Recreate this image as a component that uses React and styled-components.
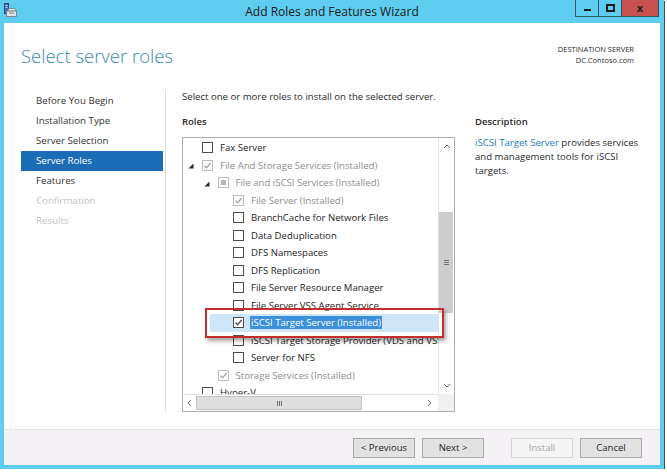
import React from 'react';
import styled, { createGlobalStyle } from 'styled-components';

const GlobalStyle = createGlobalStyle`
  html, body {
    margin: 0;
    padding: 0;
    background: #ffffff;
  }
  body {
    font-family: "Open Sans", "Noto Sans", "Liberation Sans", sans-serif;
    color: #1e1e1e;
  }
`;

const steps = [
  { label: 'Before You Begin' },
  { label: 'Installation Type' },
  { label: 'Server Selection' },
  { label: 'Server Roles', active: true },
  { label: 'Features' },
  { label: 'Confirmation', disabled: true },
  { label: 'Results', disabled: true },
];

const roles = [
  { label: 'Fax Server', level: 0 },
  { label: 'File And Storage Services (Installed)', level: 0, state: 'on', dim: true, expander: true },
  { label: 'File and iSCSI Services (Installed)', level: 1, state: 'partial', dim: true, expander: true },
  { label: 'File Server (Installed)', level: 2, state: 'on', dim: true },
  { label: 'BranchCache for Network Files', level: 2 },
  { label: 'Data Deduplication', level: 2 },
  { label: 'DFS Namespaces', level: 2 },
  { label: 'DFS Replication', level: 2 },
  { label: 'File Server Resource Manager', level: 2 },
  { label: 'File Server VSS Agent Service', level: 2 },
  { label: 'iSCSI Target Server (Installed)', level: 2, state: 'on', selected: true },
  { label: 'iSCSI Target Storage Provider (VDS and VSS hardware providers)', level: 2 },
  { label: 'Server for NFS', level: 2 },
  { label: 'Storage Services (Installed)', level: 1, state: 'on', dim: true },
  { label: 'Hyper-V', level: 0 },
];

const ServerIcon = () => (
  <svg width="13" height="14" viewBox="0 0 13 14">
    <rect x="0.5" y="0.5" width="4" height="10" fill="#3f6fb0" stroke="#24497d" strokeWidth="1" />
    <rect x="1.5" y="2" width="2" height="1" fill="#cfe2f7" />
    <rect x="1.5" y="4" width="2" height="1" fill="#cfe2f7" />
    <path d="M3 8 L5 5.5 L11 5.5 L12.5 8 Z" fill="#e9ecef" stroke="#6d7680" strokeWidth="0.8" />
    <rect x="2.5" y="8" width="10" height="5.5" fill="#dfe3e7" stroke="#6d7680" strokeWidth="0.8" />
    <rect x="5" y="9.5" width="5" height="1.2" fill="#8a939c" />
  </svg>
);

const Check = ({ color }) => (
  <svg width="9" height="9" viewBox="0 0 9 9">
    <path d="M1.5 4.6 L3.6 6.8 L7.6 1.8" fill="none" stroke={color} strokeWidth="1.2" />
  </svg>
);

const Chevron = ({ dir }) => {
  const d = {
    up: 'M1 5 L4 2 L7 5',
    down: 'M1 2 L4 5 L7 2',
    left: 'M5 1 L2 4 L5 7',
    right: 'M2 1 L5 4 L2 7',
  }[dir];
  return (
    <svg width="8" height="8" viewBox="0 0 8 8">
      <path d={d} fill="none" stroke="#6a6a6a" strokeWidth="1" />
    </svg>
  );
};

const Expander = () => (
  <svg width="6" height="6" viewBox="0 0 6 6">
    <polygon points="5.5,0.5 5.5,5.5 0.5,5.5" fill="#262626" />
  </svg>
);

const CheckBox = ({ state, dim }) => (
  <Box $dim={dim}>
    {state === 'on' && <Check color={dim ? '#9a9a9a' : '#333333'} />}
    {state === 'partial' && <Partial />}
  </Box>
);

const App = () => {
  return (
    <>
      <GlobalStyle />
      <Window>
        <TitleBar>
          <TitleIcon><ServerIcon /></TitleIcon>
          <Title>Add Roles and Features Wizard</Title>
          <Controls>
            <CtrlButton $w={22}><MinGlyph /></CtrlButton>
            <CtrlButton $w={23}><MaxGlyph /></CtrlButton>
            <CtrlButton $w={37} $close>x</CtrlButton>
          </Controls>
        </TitleBar>
        <Frame>
          <Content>
            <Header>
              <Heading>Select server roles</Heading>
              <Destination>
                <div>DESTINATION SERVER</div>
                <div>DC.Contoso.com</div>
              </Destination>
            </Header>
            <Main>
              <Nav>
                {steps.map((s) => (
                  <NavItem key={s.label} $active={s.active} $disabled={s.disabled}>
                    {s.label}
                  </NavItem>
                ))}
              </Nav>
              <RightArea>
                <Intro>Select one or more roles to install on the selected server.</Intro>
                <Columns>
                  <RolesCol>
                    <SectionLabel>Roles</SectionLabel>
                    <ListBox>
                      <Tree>
                        {roles.map((r) => (
                          <Row key={r.label} $level={r.level} $selected={r.selected}>
                            <ExpanderCell>{r.expander && <Expander />}</ExpanderCell>
                            <CheckBox state={r.state} dim={r.dim} />
                            <RowLabel $dim={r.dim} $selected={r.selected}>{r.label}</RowLabel>
                          </Row>
                        ))}
                      </Tree>
                      <VScroll>
                        <ArrowCell $h={17}><Chevron dir="up" /></ArrowCell>
                        <VTrack>
                          <VThumb style={{ marginTop: 57, height: 101 }}>
                            <Grip $vertical />
                          </VThumb>
                        </VTrack>
                        <ArrowCell $h={17}><Chevron dir="down" /></ArrowCell>
                      </VScroll>
                      <HScroll>
                        <ArrowCell $w={13}><Chevron dir="left" /></ArrowCell>
                        <HTrack>
                          <HThumb style={{ width: 166 }}>
                            <Grip />
                          </HThumb>
                        </HTrack>
                        <ArrowCell $w={17}><Chevron dir="right" /></ArrowCell>
                      </HScroll>
                      <Corner />
                      <Callout />
                    </ListBox>
                  </RolesCol>
                  <DescCol>
                    <SectionLabel>Description</SectionLabel>
                    <DescText>
                      <Link>iSCSI Target Server</Link> provides services and management tools for iSCSI targets.
                    </DescText>
                  </DescCol>
                </Columns>
              </RightArea>
            </Main>
          </Content>
          <Footer>
            <Button>&lt; Previous</Button>
            <Button>Next &gt;</Button>
            <Button $disabled $gap={27}>Install</Button>
            <Button>Cancel</Button>
          </Footer>
        </Frame>
      </Window>
    </>
  );
};

const Window = styled.div`
  width: 664px;
  height: 469px;
  background: #5fcdef;
  box-shadow: 1px 1px 0 #4a4a4a;
  display: flex;
  flex-direction: column;
`;

const TitleBar = styled.div`
  height: 23px;
  flex: none;
  display: grid;
  grid-template-columns: 1fr auto 1fr;
  align-items: start;
`;

const TitleIcon = styled.div`
  padding: 3px 0 0 4px;
  display: flex;
`;

const Title = styled.div`
  font-size: 12px;
  line-height: 24px;
  color: #1a1a1a;
`;

const Controls = styled.div`
  justify-self: end;
  margin-right: 5px;
  display: flex;
  border: 1px solid #2f5668;
  border-top: none;
`;

const CtrlButton = styled.div`
  width: ${(p) => p.$w}px;
  height: 16px;
  display: flex;
  align-items: center;
  justify-content: center;
  background: ${(p) => (p.$close ? '#c75050' : 'transparent')};
  border-left: 1px solid #2f5668;
  &:first-child {
    border-left: none;
  }
  font-size: 11px;
  font-weight: 700;
  line-height: 1;
  color: #1c1c1c;
  padding-bottom: ${(p) => (p.$close ? '2px' : 0)};
  box-sizing: border-box;
`;

const MinGlyph = styled.span`
  width: 7px;
  height: 2px;
  margin-top: 4px;
  background: #1c1c1c;
`;

const MaxGlyph = styled.span`
  width: 5px;
  height: 4px;
  border: 2px solid #1c1c1c;
`;

const Frame = styled.div`
  flex: 1;
  margin: 0 4px 4px;
  display: flex;
  flex-direction: column;
`;

const Content = styled.div`
  flex: 1;
  background: #ffffff;
  padding: 0 14px 0 17px;
  display: flex;
  flex-direction: column;
`;

const Header = styled.div`
  height: 67px;
  flex: none;
  display: flex;
  justify-content: space-between;
  align-items: flex-start;
  padding-right: 12px;
`;

const Heading = styled.h1`
  margin: 21px 0 0;
  font-size: 18.5px;
  line-height: 24px;
  font-weight: 300;
  color: #3786b8;
`;

const Destination = styled.div`
  margin-top: 21px;
  text-align: right;
  font-size: 7.5px;
  line-height: 11px;
  color: #2a2a2a;
`;

const Main = styled.div`
  height: 322px;
  display: flex;
`;

const Nav = styled.div`
  width: 144px;
  flex: none;
  border-right: 1px solid #dadada;
  padding-top: 1px;
`;

const NavItem = styled.div`
  height: 20px;
  line-height: 20px;
  padding-left: 15px;
  margin-right: 2px;
  font-size: 9.7px;
  background: ${(p) => (p.$active ? '#1b6cb6' : 'transparent')};
  color: ${(p) => (p.$active ? '#ffffff' : p.$disabled ? '#c2c2c2' : '#333333')};
`;

const RightArea = styled.div`
  flex: 1;
  min-height: 0;
  padding-left: 16px;
  display: flex;
  flex-direction: column;
`;

const Intro = styled.div`
  font-size: 9.6px;
  line-height: 14px;
  color: #2a2a2a;
`;

const Columns = styled.div`
  flex: 1;
  min-height: 0;
  margin-top: 11px;
  display: flex;
  gap: 20px;
`;

const RolesCol = styled.div`
  width: 273px;
  flex: none;
  min-height: 0;
  display: flex;
  flex-direction: column;
`;

const SectionLabel = styled.div`
  font-size: 9.5px;
  line-height: 14px;
  font-weight: 600;
  color: #2a2a2a;
  margin-bottom: 8px;
`;

const ListBox = styled.div`
  flex: 1 1 0;
  position: relative;
  border: 1px solid #abadb3;
  display: grid;
  grid-template-columns: minmax(0, 1fr) 16px;
  grid-template-rows: minmax(0, 1fr) 17px;
  min-height: 0;
`;

const Tree = styled.div`
  overflow: hidden;
  min-width: 0;
  min-height: 0;
  padding-top: 1px;
`;

const Row = styled.div`
  height: 17.5px;
  display: flex;
  align-items: center;
  white-space: nowrap;
  margin-left: ${(p) => (p.$selected ? 27 : 0)}px;
  padding-left: ${(p) => 4 + p.$level * 15.5 - (p.$selected ? 27 : 0)}px;
  background: ${(p) => (p.$selected ? '#cfe6f8' : 'transparent')};
`;

const ExpanderCell = styled.div`
  width: 15px;
  flex: none;
  display: flex;
  align-items: center;
  padding-left: 1px;
  padding-top: 2px;
  box-sizing: border-box;
`;

const Box = styled.div`
  width: 11px;
  height: 11px;
  flex: none;
  box-sizing: border-box;
  border: 1px solid ${(p) => (p.$dim ? '#bdbdbd' : '#4d4d4d')};
  background: #ffffff;
  display: flex;
  align-items: center;
  justify-content: center;
`;

const Partial = styled.div`
  width: 5px;
  height: 5px;
  background: #b5b5b5;
`;

const RowLabel = styled.span`
  margin-left: 6px;
  font-size: 9.6px;
  line-height: 13px;
  padding: 0 1px;
  color: ${(p) => (p.$selected ? '#ffffff' : p.$dim ? '#8e8e8e' : '#1e1e1e')};
  background: ${(p) => (p.$selected ? '#3b8fdb' : 'transparent')};
`;

const VScroll = styled.div`
  grid-row: 1;
  grid-column: 2;
  min-height: 0;
  border-left: 1px solid #e2e2e2;
  display: flex;
  flex-direction: column;
  background: #ffffff;
`;

const ArrowCell = styled.div`
  flex: none;
  height: ${(p) => (p.$h ? `${p.$h}px` : 'auto')};
  width: ${(p) => (p.$w ? `${p.$w}px` : 'auto')};
  display: flex;
  align-items: center;
  justify-content: center;
`;

const VTrack = styled.div`
  flex: 1;
  min-height: 0;
`;

const VThumb = styled.div`
  margin-right: 1px;
  background: #cdcdcd;
  display: flex;
  align-items: center;
  justify-content: center;
`;

const HScroll = styled.div`
  grid-row: 2;
  grid-column: 1;
  display: flex;
  border-top: 1px solid #e2e2e2;
  padding: 1px 0;
`;

const HTrack = styled.div`
  flex: 1;
  display: flex;
  align-items: stretch;
`;

const HThumb = styled.div`
  background: #dedede;
  border: 1px solid #c4c4c4;
  box-sizing: border-box;
  display: flex;
  align-items: center;
  justify-content: center;
`;

const Grip = styled.div`
  width: 5px;
  height: 5px;
  ${(p) =>
    p.$vertical
      ? `background: repeating-linear-gradient(to bottom, #6f6f6f 0 1px, transparent 1px 2px);`
      : `background: repeating-linear-gradient(to right, #6f6f6f 0 1px, transparent 1px 2px);`}
`;

const Corner = styled.div`
  grid-row: 2;
  grid-column: 2;
  background: #f0f0f0;
`;

const Callout = styled.div`
  position: absolute;
  left: 22px;
  top: 170px;
  width: 239px;
  height: 30px;
  box-sizing: border-box;
  border: 2px solid #c42d2d;
  box-shadow: 2px 3px 4px rgba(0, 0, 0, 0.35);
  pointer-events: none;
`;

const DescCol = styled.div`
  flex: 1;
  display: flex;
  flex-direction: column;
`;

const DescText = styled.div`
  margin-top: -1px;
  font-size: 9.6px;
  line-height: 14px;
  color: #2a2a2a;
`;

const Link = styled.span`
  color: #1f7cbf;
`;

const Footer = styled.div`
  height: 36px;
  flex: none;
  box-sizing: border-box;
  background: #f4f2f5;
  border-top: 1px solid #e4e4e4;
  display: flex;
  justify-content: flex-end;
  align-items: center;
  padding-right: 18px;
  gap: 7px;
`;

const Button = styled.div`
  width: 62px;
  height: 20px;
  box-sizing: border-box;
  margin-left: ${(p) => (p.$gap ? p.$gap - 7 : 0)}px;
  border: 1px solid ${(p) => (p.$disabled ? '#d5d5d5' : '#a9a9a9')};
  background: ${(p) => (p.$disabled ? '#f5f5f5' : '#e2e2e2')};
  color: ${(p) => (p.$disabled ? '#a6a6a6' : '#222222')};
  font-size: 9.5px;
  display: flex;
  align-items: center;
  justify-content: center;
`;

export default App;
